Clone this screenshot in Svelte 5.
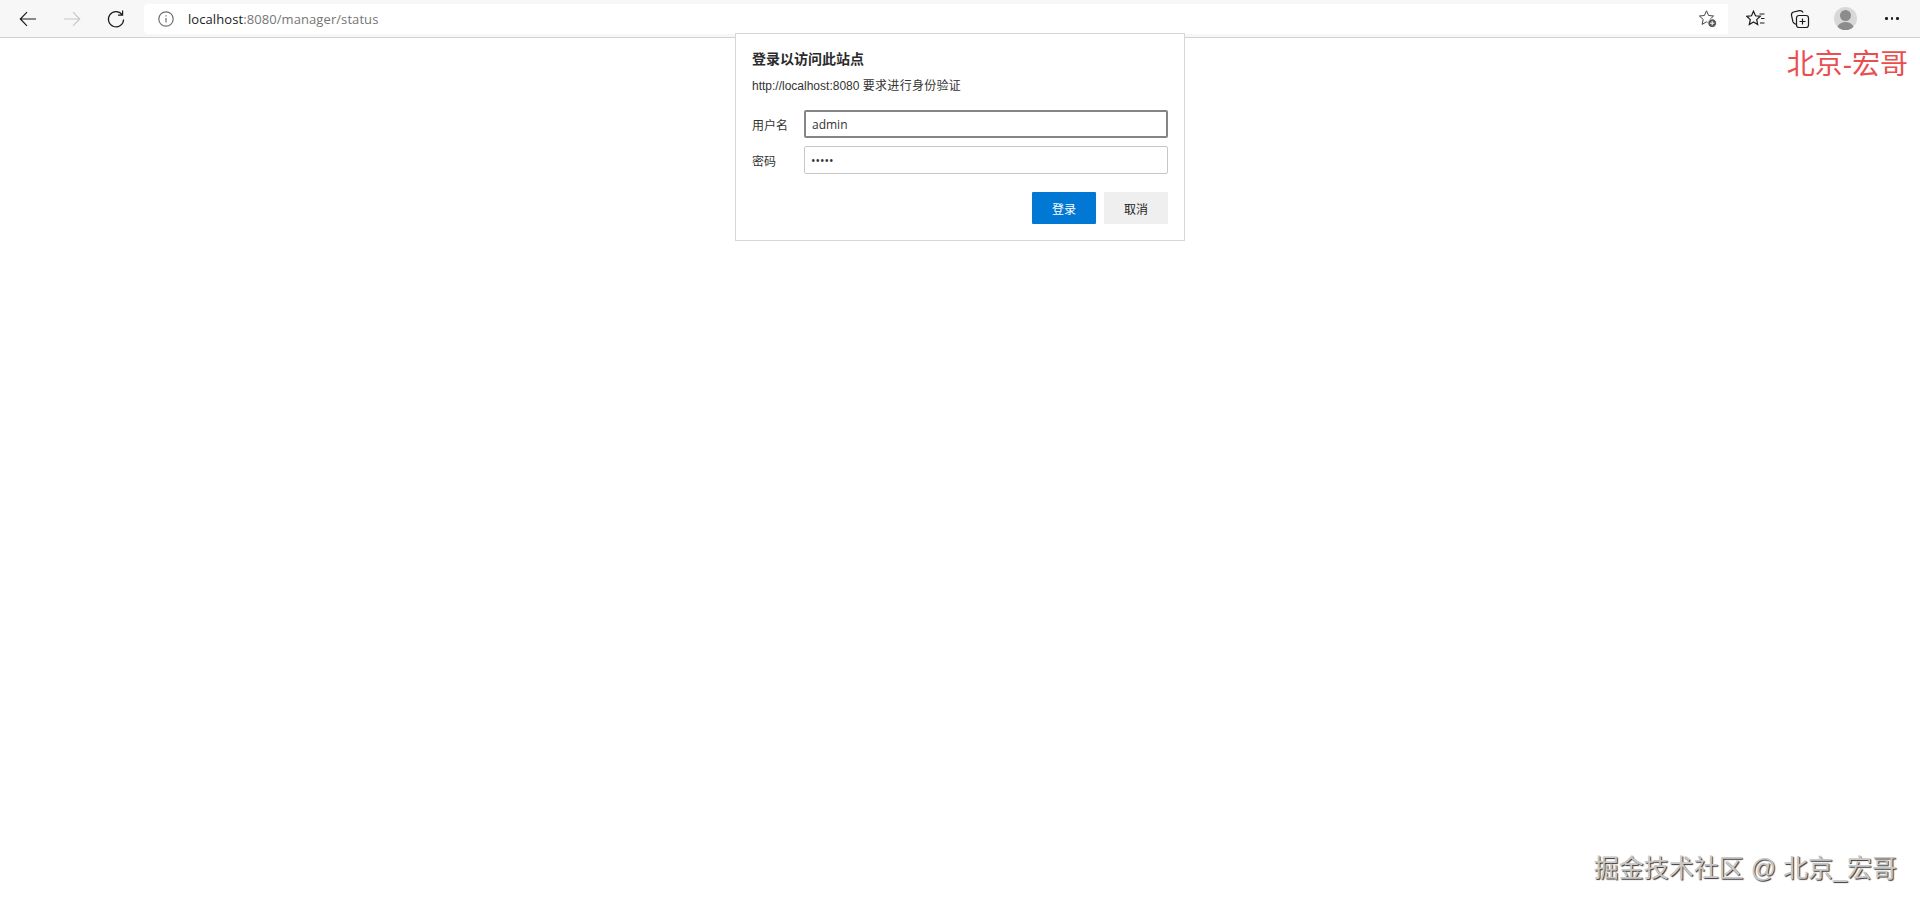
<script>
  const username = "admin";
</script>

<div class="page">
  <header class="toolbar">
    <button class="nav" aria-label="back">
      <svg width="20" height="20" viewBox="0 0 20 20"><path d="M18 10H2.500M9 3.200 2.300 10 9 16.800" /></svg>
    </button>
    <button class="nav off" aria-label="forward">
      <svg width="20" height="20" viewBox="0 0 20 20"><path d="M2 10h15.500M11 3.200l6.700 6.800-6.700 6.800" /></svg>
    </button>
    <button class="nav" aria-label="reload">
      <svg width="20" height="20" viewBox="0 0 20 20"><path d="M16 5.600A7.600 7.600 0 1 0 17.600 10.500M16.600 1.600v4.600h-4.600" /></svg>
    </button>
    <div class="address">
      <svg class="info" width="16" height="16" viewBox="0 0 16 16">
        <circle cx="8" cy="8" r="7.200" />
        <path d="M8 7v4.600M8 4.200v1.400" />
      </svg>
      <span class="url"><span class="host">localhost</span>:8080/manager/status</span>
      <svg class="fav" width="18" height="18" viewBox="0 0 18 18">
        <path d="M7.500.8 9.600 5.500l5 .5-3.800 3.400 1.100 5-4.400-2.600-4.400 2.600 1.100-5L.4 6l5-.5z" />
        <circle class="badge" cx="13.200" cy="13.200" r="4.400" />
        <path class="plus" d="M13.200 11v4.400M11 13.200h4.400" />
      </svg>
    </div>
    <div class="tools">
      <svg width="20" height="20" viewBox="0 0 20 20">
        <path d="M7.500 2.200 9.500 6.800l4.800.5-3.600 3.300 1 5-4.200-2.600-4.200 2.600 1-5L.7 7.300l4.800-.5z" />
        <path d="M13.500 5h5M15 9.500h3.500M14 14h4.500" />
      </svg>
      <svg width="20" height="20" viewBox="0 0 20 20">
        <rect x="6.500" y="6.500" width="12" height="12" rx="2.500" />
        <path d="M12.500 9.500v6M9.500 12.500h6" />
        <path d="M6.500 15.500C4.500 15 3.600 14.200 3 13L1.500 6.500C1.200 4.800 2 3.500 3.600 3L9.500 1.600C11 1.400 12.400 2 13.200 3.500" />
      </svg>
      <div class="avatar">
        <span class="head"></span>
        <span class="body"></span>
      </div>
      <div class="more"><i></i><i></i><i></i></div>
    </div>
  </header>

  <div class="dialog">
    <h2>登录以访问此站点</h2>
    <p>http://localhost:8080 <span class="cjk">要求进行身份验证</span></p>
    <div class="form">
      <span class="label">用户名</span>
      <input class="focused" value={username} />
      <span class="label">密码</span>
      <input type="password" value="admin" />
    </div>
    <div class="actions">
      <button class="primary">登录</button>
      <button class="cancel">取消</button>
    </div>
  </div>

  <div class="mark">北京-宏哥</div>
  <div class="footer">掘金技术社区 @ 北京_宏哥</div>
</div>

<style>
  :global(body) {
    margin: 0;
    background: #fff;
  }

  .page {
    position: relative;
    height: 907px;
    overflow: hidden;
    font-family: "Liberation Sans", "Noto Sans CJK SC", sans-serif;
  }

  .toolbar {
    display: flex;
    align-items: center;
    height: 37px;
    padding: 0 0 0 6px;
    background: #f7f7f7;
    border-bottom: 1px solid #d2d2d2;
  }

  svg path,
  svg circle,
  svg rect {
    fill: none;
    stroke: #1c1c1c;
    stroke-width: 1.2;
  }

  .nav {
    display: flex;
    align-items: center;
    justify-content: center;
    width: 44px;
    height: 36px;
    padding: 0;
    background: none;
    border: 0;
  }

  .off svg path {
    stroke: #c8c8c8;
  }

  .address {
    display: flex;
    align-items: center;
    width: 1584px;
    height: 30px;
    margin-left: 6px;
    padding: 0 11px 0 14px;
    box-sizing: border-box;
    background: #fff;
    border-radius: 4px 0 0 4px;
  }

  .info circle,
  .info path {
    stroke: #6f6f6f;
  }

  .url {
    margin-left: 14px;
    font-size: 13px;
    letter-spacing: 0.08px;
    font-family: "Open Sans", "Liberation Sans", sans-serif;
    color: #767676;
  }

  .host {
    color: #1c1c1c;
  }

  .fav {
    margin-left: auto;
  }

  .fav path {
    stroke: #444;
    stroke-width: 1;
  }

  .fav .badge {
    fill: #555;
    stroke: #fff;
    stroke-width: 1;
  }

  .fav .plus {
    stroke: #fff;
  }

  .tools {
    display: flex;
    align-items: center;
    gap: 24px;
    margin-left: 18px;
  }

  .avatar {
    position: relative;
    width: 23px;
    height: 23px;
    overflow: hidden;
    background: #d8d8d8;
    border-radius: 50%;
  }

  .head {
    position: absolute;
    top: 3px;
    left: 6px;
    width: 11px;
    height: 11px;
    background: #8c8c8c;
    border-radius: 50%;
  }

  .body {
    position: absolute;
    top: 15px;
    left: 3px;
    width: 17px;
    height: 14px;
    background: #8c8c8c;
    border-radius: 50%;
  }

  .more {
    display: flex;
    gap: 3px;
    margin-left: 4px;
  }

  .more i {
    width: 2.500px;
    height: 2.500px;
    background: #1c1c1c;
    border-radius: 50%;
  }

  .dialog {
    position: absolute;
    top: 33px;
    left: 735px;
    width: 450px;
    height: 208px;
    padding: 16px;
    box-sizing: border-box;
    background: #fff;
    border: 1px solid #d6d6d6;
    color: #1c1c1c;
  }

  h2 {
    margin: 0;
    font-size: 14px;
    line-height: 18px;
    font-weight: 700;
    color: #2a2a2a;
  }

  p {
    margin: 9px 0 0;
    font-size: 12px;
    line-height: 18px;
    color: #333;
  }

  .cjk {
    letter-spacing: 0.3px;
  }

  .form {
    display: grid;
    grid-template-columns: 52px 1fr;
    row-gap: 8px;
    align-items: center;
    margin-top: 15px;
  }

  .label {
    font-size: 12px;
    color: #333;
  }

  input {
    height: 28px;
    padding: 0 6px;
    box-sizing: border-box;
    width: 100%;
    font: 12px "Open Sans", "Liberation Sans", sans-serif;
    color: #333;
    background: #fff;
    border: 1px solid #c8c8c8;
    border-radius: 2px;
    outline: none;
  }

  .focused {
    border: 2px solid #858585;
  }

  .actions {
    display: flex;
    justify-content: flex-end;
    gap: 8px;
    margin-top: 18px;
  }

  .actions button {
    width: 64px;
    height: 32px;
    padding: 0;
    font: 12px "Liberation Sans", "Noto Sans CJK SC", sans-serif;
    border: 0;
    border-radius: 1px;
  }

  .primary {
    color: #fff;
    background: #0078d4;
  }

  .cancel {
    color: #1c1c1c;
    background: #efefef;
  }

  .mark {
    position: absolute;
    top: 48px;
    right: 12px;
    font-size: 28px;
    line-height: 34px;
    color: #e94f4f;
  }

  .footer {
    position: absolute;
    right: 23px;
    bottom: 23px;
    font-size: 25px;
    line-height: 32px;
    color: #c8c8c8;
    text-shadow: 1px 1px 1px #333;
  }
</style>
